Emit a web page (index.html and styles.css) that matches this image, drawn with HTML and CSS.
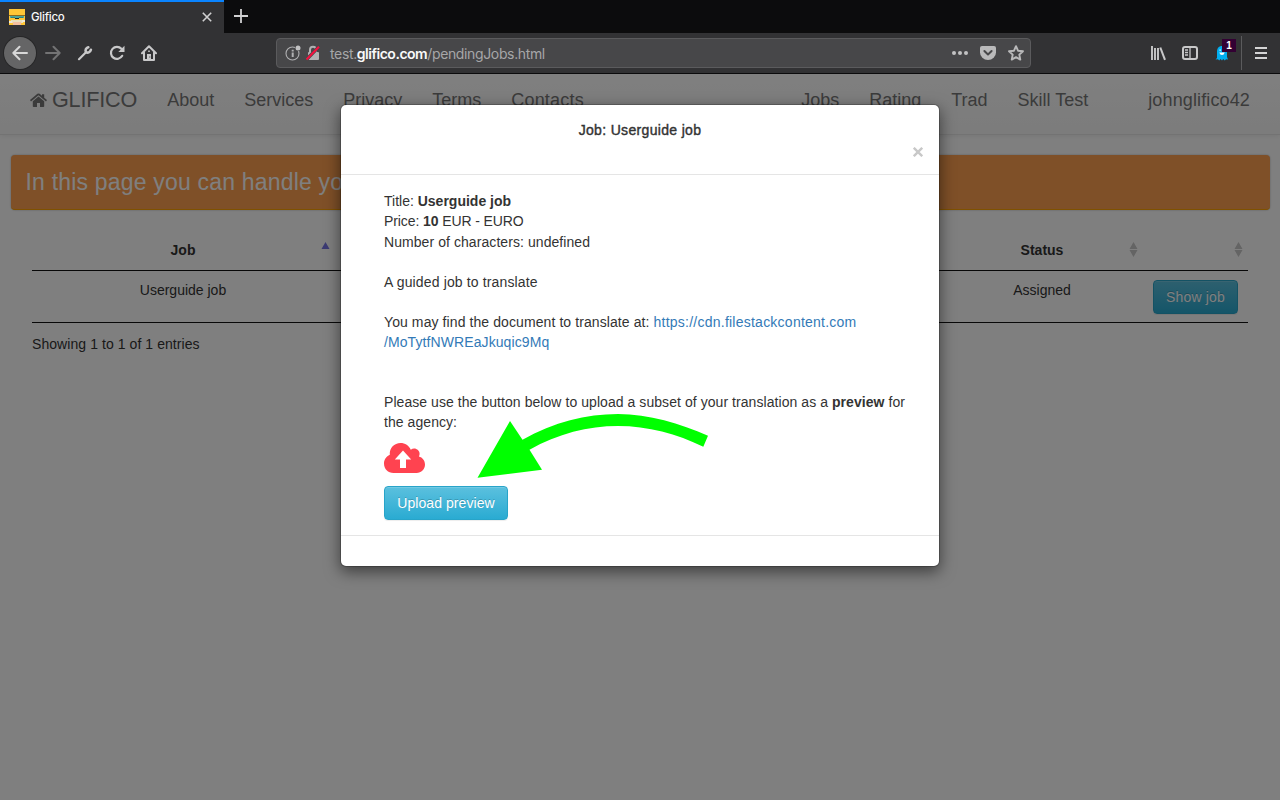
FILE: index.html
```html
<!DOCTYPE html>
<html lang="en">
<head>
<meta charset="utf-8">
<title>Glifico</title>
<link rel="stylesheet" href="styles.css">
</head>
<body>
<div class="tabs">
  <div class="tab">
    <svg class="favicon" width="16" height="16" viewBox="0 0 16 16"><path fill="#ffc636" d="M0 0h16v16H0z"/><path fill="#8a6a22" d="M0 6h16v1H0z"/><path fill="#4aa79c" d="M1 7h14v2H1z"/><path fill="#222a28" d="M6 9h4v1H6z"/><path fill="#357f78" d="M2 8h4v1H2zM10 8h4v1h-4z"/><path fill="#e9dfbd" d="M2 11h12v3H2z"/><path fill="#f3bfa0" d="M4 13h8v3H4z"/><path fill="#f1e9d5" d="M0 12h3v2H0zM13 11h3v2h-3z"/></svg>
    <span class="tab-title">Glifico</span>
    <svg class="tab-close" width="10" height="10" viewBox="0 0 10 10"><path d="M.8.8l8.4 8.4M9.2.8L.8 9.2" stroke="#d0d0d1" stroke-width="1.6"/></svg>
  </div>
  <svg class="new-tab" width="14" height="14" viewBox="0 0 14 14"><path d="M7 0v14M0 7h14" stroke="#d0d0d1" stroke-width="1.8"/></svg>
</div>
<div class="toolbar">
  <div class="nav-icons">
    <span class="back"><svg width="16" height="16" viewBox="0 0 16 16" fill="none" stroke="#d8d8d8" stroke-width="2" stroke-linecap="round" stroke-linejoin="round"><path d="M15 8H1.3M7.5 1.8L1.3 8l6.2 6.2"/></svg></span>
    <svg width="16" height="16" viewBox="0 0 16 16" fill="none" stroke="#737374" stroke-width="2" stroke-linecap="round" stroke-linejoin="round"><path d="M1 8h13.7M8.5 1.8L14.7 8l-6.2 6.2"/></svg>
    <svg width="16" height="16" viewBox="0 0 16 16" fill="none" stroke="#c8c8c9" stroke-linecap="round" stroke-linejoin="round"><path stroke-width="2.200" d="M2 14.200L9 7.300"/><path stroke-width="2.600" d="M11.300 2.300C9 2.900 8 5 8.900 7c1.700 1.300 4.400.4 5-2.200"/></svg>
    <svg width="16" height="16" viewBox="0 0 16 16"><path d="M13.2 10.800A6 6 0 1 1 12.400 3.800" fill="none" stroke="#c8c8c9" stroke-width="2.200" stroke-linecap="round"/><path fill="#c8c8c9" d="M15.500.8v6.200H9.300z"/></svg>
    <svg width="16" height="16" viewBox="0 0 16 16"><path d="M1 8.300L8 1.200l7 7.100M3 7.500V15h10V7.500" fill="none" stroke="#c8c8c9" stroke-width="2" stroke-linecap="round" stroke-linejoin="round"/><path fill="#c8c8c9" d="M6 9h4v6H6z"/><path fill="#c8c8c9" d="M7.200 5.500h1.600v1.600H7.200z"/><path fill="#39393b" d="M8.300 11.500h1v1h-1z"/></svg>
  </div>
  <div class="urlbar">
    <svg width="16" height="16" viewBox="0 0 16 16"><circle cx="7.500" cy="8.500" r="6.500" fill="none" stroke="#b1b1b3" stroke-width="1.100"/><path fill="#b1b1b3" d="M6.700 7.500h2v4.500h-2zM6.700 4.800h2v1.700h-2z"/><circle cx="13" cy="3" r="3.200" fill="#474749"/><circle cx="13" cy="3" r="2.500" fill="#c2c2c3"/></svg>
    <svg class="lock" width="14" height="16" viewBox="0 0 14 16"><path d="M4 8V4.800a3 3 0 0 1 6 0V8" fill="none" stroke="#b1b1b3" stroke-width="2"/><rect x="2" y="7" width="11" height="8" rx="1" fill="#b1b1b3"/><path d="M.5 14.500L13 1.700" stroke="#474749" stroke-width="3.400"/><path d="M.5 14.500L13 1.700" stroke="#f5103f" stroke-width="2"/></svg>
    <span class="url">test.<b>glifico.com</b>/pendingJobs.html</span>
    <svg width="16" height="16" viewBox="0 0 16 16" fill="#c2c2c3"><circle cx="2" cy="8" r="2"/><circle cx="8" cy="8" r="2"/><circle cx="14" cy="8" r="2"/></svg>
    <svg width="16" height="16" viewBox="0 0 16 16"><path fill="#b9b9ba" d="M2 1h12a2 2 0 0 1 2 2v4.500a8 7.500 0 0 1-16 0V3a2 2 0 0 1 2-2z"/><path d="M4.400 6L8 9.500 11.600 6" fill="none" stroke="#474749" stroke-width="2" stroke-linecap="round" stroke-linejoin="round"/></svg>
    <svg width="16" height="16" viewBox="0 0 16 16"><path d="M8 1.200l2 4.500 5 .5-3.700 3.400 1 5L8 12.100l-4.300 2.500 1-5L1 6.200l5-.5z" fill="none" stroke="#b9b9ba" stroke-width="1.900" stroke-linejoin="round"/></svg>
  </div>
  <div class="tools">
    <svg width="16" height="16" viewBox="0 0 16 16"><path d="M2 1v14M5 3v12M8 3v12" stroke="#c8c8c9" stroke-width="1.900" /><path d="M10.300 2.500L15 14.800" stroke="#c8c8c9" stroke-width="2"/></svg>
    <svg width="16" height="16" viewBox="0 0 16 16"><rect x="1" y="2" width="14" height="12" rx="2" fill="none" stroke="#c8c8c9" stroke-width="2"/><path d="M8 2v12M3 5h3M3 7.500h3M3 10h3" stroke="#c8c8c9" stroke-width="1.300"/></svg>
    <span class="ghost"><svg width="14" height="16" viewBox="0 0 14 16"><path fill="#00aef0" d="M2 13V7c0-4 2-6 5-6s5 2 5 6v5l1 2.500-2-.3-1.200 1.300L8.200 14 7 15.500 5.500 14l-1.300 1.500L3 14.200l-2.500.3z"/><path d="M4.300 7.500h5.400Q9 10 7 10 5 10 4.300 7.500z" fill="#fff"/><path fill="#fff" d="M4.500 4.500h1.300v1.300H4.500z"/></svg><b class="badge">1</b></span>
    <i class="sep"></i>
    <svg width="14" height="14" viewBox="0 0 14 14"><path d="M1 2h12M1 7h12M1 12h12" stroke="#d4d4d5" stroke-width="2"/></svg>
  </div>
</div>
<div class="page">
  <nav class="navbar">
    <a class="brand"><svg width="17" height="15" viewBox="0 0 17 15" fill="#777"><path d="M8.500 3.400L14.200 8.200V13.200q0 .8-.8.800H10V10H7v4H3.600Q2.800 14 2.800 13.200V8.200z"/><path d="M8.500.4q.6 0 1.100.4L12 2.800V1.300h2.200v3.400L17 7.100l-1 1.300L8.500 2.200 1 8.400 0 7.100 7.400.8q.5-.4 1.100-.4z"/></svg><span>GLIFICO</span></a>
    <a>About</a><a>Services</a><a>Privacy</a><a>Terms</a><a class="contacts">Contacts</a>
    <a class="jobs">Jobs</a><a>Rating</a><a>Trad</a><a>Skill Test</a><a class="user">johnglifico42</a>
  </nav>
  <div class="alert">In this page you can handle your jobs</div>
  <table class="jobs-table">
    <thead><tr>
      <th class="c-job">Job<svg class="sort" width="9" height="16" viewBox="0 0 9 16"><path fill="#7876e6" d="M4.500 1L8.500 8h-8z"/></svg></th>
      <th class="c-mid"></th>
      <th class="c-status">Status<svg class="sort" width="9" height="16" viewBox="0 0 9 16"><path fill="#c8c8c8" d="M4.500 1L8.500 8h-8zM.5 9h8l-4 7z"/></svg></th>
      <th class="c-action"><svg class="sort" width="9" height="16" viewBox="0 0 9 16"><path fill="#c8c8c8" d="M4.500 1L8.500 8h-8zM.5 9h8l-4 7z"/></svg></th>
    </tr></thead>
    <tbody><tr><td>Userguide job</td><td></td><td>Assigned</td><td><button class="btn show">Show job</button></td></tr></tbody>
  </table>
  <div class="info">Showing 1 to 1 of 1 entries</div>
  <div class="backdrop"></div>
  <div class="modal">
    <div class="modal-header"><div class="modal-title">Job: Userguide job</div><svg class="close" width="10" height="10" viewBox="0 0 10 10"><path d="M.8.8l8.400 8.400M9.200.8L.8 9.200" stroke="#c8c8c8" stroke-width="2.400"/></svg></div>
    <div class="modal-body">
      <p>Title: <b>Userguide job</b></p>
      <p class="price">Price: <b>10</b> EUR - EURO</p>
      <p class="chars">Number of characters: undefined</p>
      <p class="desc">A guided job to translate</p>
      <p class="doc">You may find the document to translate at: <a><span class="host">https://cdn.filestackcontent.com</span><br>/MoTytfNWREaJkuqic9Mq</a></p>
      <p class="hint">Please use the button below to upload a subset of your translation as a <b>preview</b> for<br>the agency:</p>
      <svg class="cloud" width="41" height="30" viewBox="0 0 41 30"><path fill="#ff4350" d="M9.500 30C4 30 0 26 0 20.500 0 16.500 2.300 13.200 5.800 11.700 5.300 5 10.300 0 16.500 0c4.600 0 8.500 2.600 10.300 6.700C30.500 3.800 35.800 6.700 35.600 11c0 .9-.3 1.700-.7 2.400C38.500 14.300 41 17.500 41 21.500 41 26.300 37.300 30 32.600 30z"/><path fill="#fff" d="M19 7.500l8.200 9h-5.200v8.500h-6v-8.500h-5.200z"/></svg>
      <button class="btn upload">Upload preview</button>
    </div>
    <div class="modal-footer"></div>
  </div>
  <svg class="arrow" width="232" height="68" viewBox="0 0 232 68"><path fill="#0f0" d="M.5 63.800L33 7 45.500 25.700C77 8 109 0 141 0 172 .4 203 9.200 231 21.800L226.300 32.700C200 20 171 12 141 12 111 12 81 19.700 52.500 35.700L65 55.700z"/></svg>
</div>
</body>
</html>
```
FILE: styles.css
```css
* { box-sizing: border-box; }
body { margin: 0; height: 800px; overflow: hidden; display: flex; flex-direction: column; font: 14px/20px "Liberation Sans", Arial, sans-serif; color: #333; }
svg { flex: none; display: block; }
p { margin: 0; }

.tabs { height: 33px; display: flex; background: #0c0c0d; font-family: Inter, sans-serif; }
.tab { width: 224px; height: 33px; display: flex; align-items: center; padding: 2px 12px 0 9px; background: #323234; border-top: 2px solid #0a84ff; }
.favicon { margin-top: -3px; }
.tab-title { margin: -3px auto 0 6px; font-size: 11.5px; font-weight: 500; color: #f9f9fa; letter-spacing: -.25px; }
.tab-close { margin-top: -3px; }
.new-tab { margin: 9px 0 0 10px; }

.toolbar { height: 41px; flex: none; display: flex; align-items: center; padding: 0 12px 0 4px; background: #323234; border-bottom: 1px solid #0c0c0d; }
.nav-icons { display: flex; align-items: center; gap: 16px; width: 272px; }
.back { width: 32px; height: 32px; display: flex; align-items: center; justify-content: center; margin-right: -7px; border-radius: 50%; background: #656566; box-shadow: 0 0 0 1px #272728; }
.urlbar { width: 755px; height: 30px; display: flex; align-items: center; gap: 12px; padding: 0 6px 0 8px; border: 1px solid #5b5b5d; border-radius: 4px; background: #474749; }
.lock { margin-left: -7px; }
.url { flex: 1; margin: 2px 0 0 -2px; font: 14px/20px Inter, sans-serif; letter-spacing: -.36px; color: #a6a6a8; }
.url b { font-weight: 600; letter-spacing: -.48px; color: #f9f9fa; }
.tools { display: flex; align-items: center; gap: 16px; margin-left: auto; }
.ghost { position: relative; margin-left: 1px; }
.badge { position: absolute; left: 7px; top: -6px; width: 14px; height: 13px; background: #330033; color: #fff; font-size: 10px; line-height: 13px; text-align: center; }
.sep { width: 1px; height: 34px; background: #5b5b5d; margin: 0 -4px 0 -4px; }

.page { position: relative; flex: 1; background: #fff; }
.navbar { display: flex; align-items: flex-start; gap: 30px; height: 61px; padding: 15px 30px 0; font-size: 18px; line-height: 22px; color: #777; background: linear-gradient(#fff, #f8f8f8); border-bottom: 1px solid #e7e7e7; box-shadow: 0 1px 5px rgba(0,0,0,.075); white-space: nowrap; }
.brand { display: flex; gap: 5px; font-size: 21.6px; letter-spacing: -.18px; }
.brand svg { margin-top: 4px; }
.contacts { letter-spacing: .2px; }
.jobs { margin-left: auto; }
.user { margin-left: 30px; letter-spacing: .13px; }
.alert { height: 55px; margin: 20px 10.5px 0; padding: 15px; border-radius: 4px; border-bottom: 1px solid #ffa200; background: #ffa050; box-shadow: 0 0 2px rgba(0,0,0,.3); color: #fff; font-size: 23px; line-height: 25px; letter-spacing: .19px; }
.jobs-table { width: 1216px; margin: 21px 0 0 32px; table-layout: fixed; border-collapse: separate; border-spacing: 0; border-bottom: 1px solid #111; text-align: center; }
.jobs-table th { position: relative; height: 40px; padding: 0 0 2px; border-bottom: 1px solid #111; }
.jobs-table td { height: 51px; padding: 9px 0 8px; vertical-align: top; }
.c-job { width: 302px; }
.c-mid { width: 607px; }
.c-status { width: 202px; }
.sort { position: absolute; right: 5px; top: 10px; }
.c-job .sort { right: 4px; }
.info { margin: 11px 32px; letter-spacing: .07px; }
.btn { height: 34px; padding: 0 12px; border: 1px solid #28a4c9; border-radius: 4px; background: linear-gradient(#5bc0de, #2aabd2); box-shadow: inset 0 1px 0 rgba(255,255,255,.15), 0 1px 1px rgba(0,0,0,.075); color: #fff; font: 14px/20px "Liberation Sans", Arial, sans-serif; text-shadow: 0 -1px 0 rgba(0,0,0,.2); white-space: nowrap; }
.show { width: 85px; letter-spacing: .15px; padding: 0; }
.upload { width: 124px; letter-spacing: .07px; padding: 0; }
.backdrop { position: absolute; inset: 0; background: rgba(0,0,0,.5); }

.modal { position: absolute; left: 340px; top: 30px; width: 600px; height: 463px; background: #fff; background-clip: padding-box; border: 1px solid rgba(0,0,0,.2); border-radius: 6px; box-shadow: 0 5px 15px rgba(0,0,0,.5); }
.modal-header { height: 70px; padding: 15px; border-bottom: 1px solid #e5e5e5; }
.modal-title { text-align: center; font-weight: 500; letter-spacing: .33px; -webkit-text-stroke: .4px #333; }
.close { margin: 7px 1px 0 auto; }
.modal-body { height: 361px; padding: 16px 0 0 43px; border-bottom: 1px solid #e5e5e5; white-space: nowrap; }
.price { letter-spacing: -.1px; }
.chars { padding-top: 1px; letter-spacing: .07px; }
.desc { margin-top: 20px; letter-spacing: .14px; }
.doc { margin-top: 20px; letter-spacing: .09px; }
.doc a { color: #337ab7; }
.host { letter-spacing: .24px; }
.hint { margin-top: 40px; letter-spacing: .06px; }
.cloud { margin: 11px 0 13px; }
.arrow { position: absolute; left: 477px; top: 340px; }
```
